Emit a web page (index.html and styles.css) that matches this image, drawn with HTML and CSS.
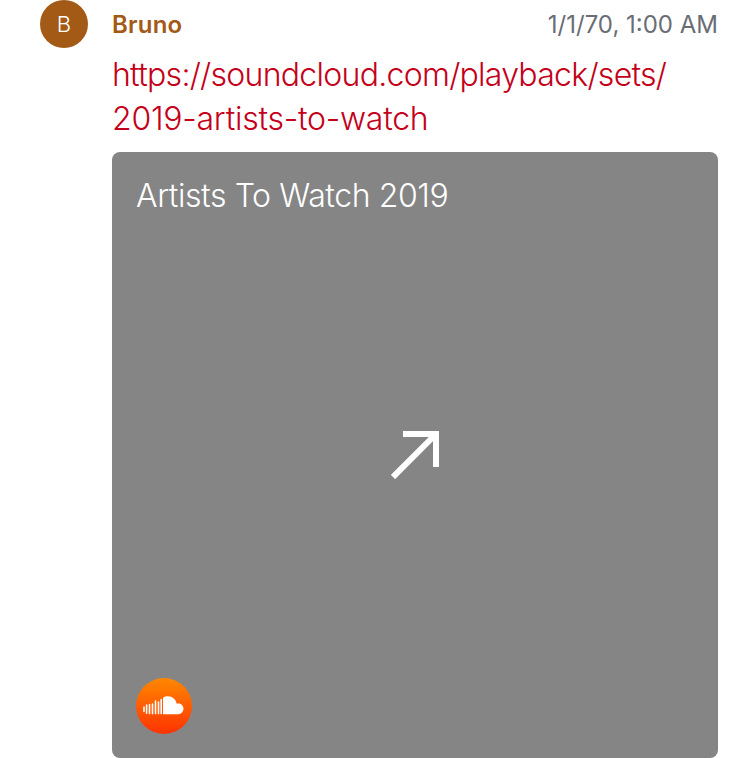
FILE: index.html
```
<!DOCTYPE html>
<html lang="en">
<head>
<meta charset="utf-8">
<title>Conversation</title>
<link rel="stylesheet" href="styles.css">
</head>
<body>
<article class="message">
  <div class="avatar">B</div>
  <div class="content">
    <header class="header"><span class="name">Bruno</span><time class="time">1/1/70, 1:00 AM</time></header>
    <a class="link"><span class="first">https://soundcloud.com/playback/sets/</span><br><span class="second">2019-artists-to-watch</span></a>
    <section class="card">
      <h1 class="title">Artists To Watch 2019</h1>
      <svg class="arrow" viewBox="0 0 48 48"><path d="M12 3H45V36M45 3L2 46" fill="none" stroke="#fff" stroke-width="6"/></svg>
      <svg class="logo" viewBox="0 0 56 56">
        <defs><linearGradient id="orange" x1="0" y1="0" x2="0" y2="1"><stop stop-color="#ff8800"/><stop offset="1" stop-color="#ff3300"/></linearGradient></defs>
        <circle cx="28" cy="28" r="28" fill="url(#orange)"/>
        <path d="M27 19.700C28.500 18.700 30 18.300 32 18.300C36.500 18.300 40 21.600 40.700 25.800C44.500 24.500 47.500 27.500 47.500 30.800C47.500 33.800 45.200 36.200 42.200 36.200H27Z" fill="#fff"/>
        <path d="M8 29V33.500M10.600 27V35.300M13.500 26.500V35.600M16.500 26V35.600M19.500 23V35.600M22.500 24V35.600M25.200 21.500V35.600" stroke="#fff" stroke-width="1.600" stroke-linecap="round"/>
      </svg>
    </section>
  </div>
</article>
</body>
</html>
```
FILE: styles.css
```
body { margin: 0; background: #fff; font-family: Inter, sans-serif; }
.message { display: flex; gap: 24px; width: 678px; margin-left: 40px; }
.avatar { flex: none; width: 48px; height: 48px; border-radius: 50%; background: #a35a16; color: #fff; font-size: 22px; font-weight: 300; line-height: 49px; text-align: center; }
.content { flex: 1; min-width: 0; }
.header { display: flex; justify-content: space-between; height: 53px; line-height: 50px; font-size: 24px; }
.name { color: #a35a16; font-weight: 600; letter-spacing: 0.2px; }
.time { color: #696d75; }
.link { display: block; height: 99px; color: #c4001a; font-size: 32px; font-weight: 300; line-height: 44px; white-space: nowrap; }
.first { letter-spacing: -0.72px; }
.second { letter-spacing: -0.24px; }
.card { box-sizing: border-box; display: flex; flex-direction: column; justify-content: space-between; height: 606px; padding: 25px 24px 24px; border-radius: 8px; background: #858585; color: #fff; }
.title { margin: 0; font-size: 32px; font-weight: 300; line-height: 38px; letter-spacing: -0.4px; white-space: nowrap; }
.arrow { width: 48px; height: 48px; align-self: center; margin-top: 17px; }
.logo { width: 56px; height: 56px; }
```
